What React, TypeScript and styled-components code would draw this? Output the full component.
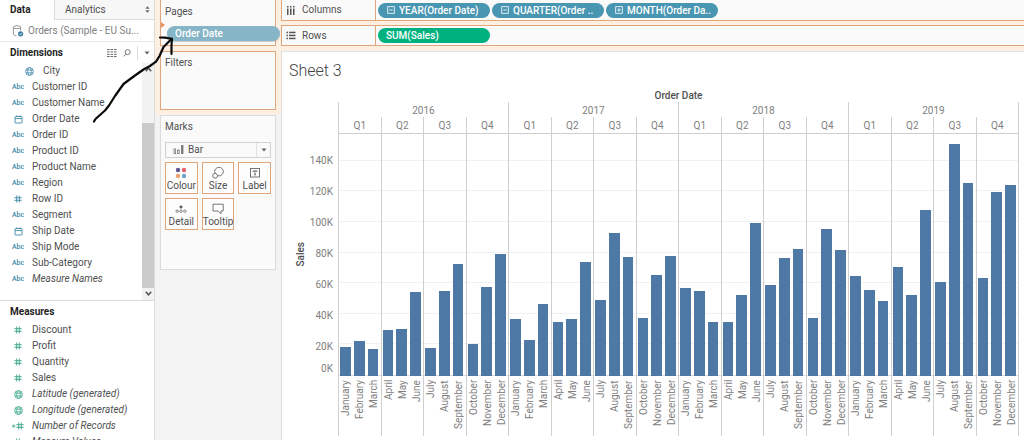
import React from "react";
import styled, { createGlobalStyle, css } from "styled-components";

const color = {
  text: "#505050",
  heading: "#1f1f1f",
  muted: "#808080",
  dimension: "#3f88a6",
  measure: "#35a486",
  orange: "#e0a67a",
  peach: "#fdf0e3",
  line: "#dcdcdc",
  axisLine: "#cfcfcf",
  panel: "#fafafa",
  canvas: "#f3f3f3",
  bar: "#4e79a7",
};

const GlobalStyle = createGlobalStyle`
  *, *::before, *::after { box-sizing: border-box; }
  body { margin: 0; overflow: hidden; background: #fff; }
  body, button, select {
    font-family: Roboto, "Liberation Sans", sans-serif;
    font-size: 10px;
    line-height: 16px;
    color: ${color.text};
  }
  button { padding: 0; border: 0; background: none; cursor: pointer; }
  h1, h2, ul, p { margin: 0; padding: 0; }
  ul { list-style: none; }
`;

const Workspace = styled.div`
  position: relative;
  display: grid;
  grid-template-columns: 155px 126px minmax(0, 1fr);
  height: 100vh;
  overflow: hidden;
`;

/* ---------- Data pane ---------- */

const DataPane = styled.aside`
  display: flex;
  flex-direction: column;
  min-height: 0;
  overflow: hidden;
  background: #fff;
  border-right: 1px solid ${color.line};
`;

const Tabs = styled.div`
  display: flex;
  flex: none;
  height: 20px;
`;

const Tab = styled.button<{ $active?: boolean }>`
  display: flex;
  align-items: center;
  justify-content: space-between;
  text-align: left;
  padding: 0 4px 0 10px;
  ${(p) =>
    p.$active
      ? css`
          width: 54px;
          font-weight: 700;
          color: ${color.heading};
        `
      : css`
          flex: 1;
          background: #f7f7f7;
          border-left: 1px solid ${color.line};
          border-bottom: 1px solid ${color.line};
        `}
`;

const Source = styled.div`
  display: flex;
  flex: none;
  align-items: center;
  gap: 4px;
  height: 22px;
  padding-left: 12px;
  white-space: nowrap;
  color: ${color.muted};
  border-bottom: 1px solid #e6e6e6;
`;

const SectionHead = styled.div`
  display: flex;
  flex: none;
  align-items: center;
  height: 21px;
  padding: 0 4px 0 10px;
`;

const SectionTitle = styled.h2`
  flex: 1;
  font-size: 10px;
  font-weight: 700;
  color: ${color.heading};
`;

const Tools = styled.div`
  display: flex;
  align-items: center;
  gap: 6px;
`;

const IconButton = styled.button`
  display: flex;
`;

const Divider = styled.i`
  width: 1px;
  height: 14px;
  background: ${color.line};
`;

const ScrollArea = styled.div`
  display: flex;
  flex: none;
  height: 238px;
  border-bottom: 1px solid ${color.line};
`;

const FieldList = styled.ul`
  flex: 1;
`;

const FieldRow = styled.li<{ $nested?: boolean; $generated?: boolean }>`
  display: flex;
  align-items: center;
  gap: 7px;
  height: 16px;
  padding-left: ${(p) => (p.$nested ? 22 : 11)}px;
  font-style: ${(p) => (p.$generated ? "italic" : "normal")};
  white-space: nowrap;
`;

const FieldIcon = styled.span<{ $measure?: boolean }>`
  display: flex;
  justify-content: center;
  width: 14px;
  font-size: 7px;
  font-weight: 500;
  font-style: normal;
  color: ${(p) => (p.$measure ? color.measure : color.dimension)};
`;

const ScrollBar = styled.div`
  display: flex;
  flex-direction: column;
  align-items: center;
  width: 12px;
  padding: 4px 0;
  background: #f2f2f2;
`;

const ScrollTrack = styled.div`
  flex: 1;
  width: 100%;
  margin: 3px 0;
  padding-top: 48px;
`;

const ScrollThumb = styled.div`
  height: 100%;
  background: #cbcbcb;
`;

/* ---------- Cards ---------- */

const Cards = styled.div`
  display: flex;
  flex-direction: column;
  background: ${color.canvas};
`;

const DropZone = styled.div`
  display: flex;
  flex-direction: column;
  gap: 5px;
  padding: 0 5px 5px;
  background: ${color.peach};
`;

const Card = styled.section<{ $drop?: boolean; $first?: boolean; $height: number }>`
  position: relative;
  height: ${(p) => p.$height}px;
  padding: ${(p) => (p.$first ? 4 : 3)}px 4px 0;
  background: ${color.panel};
  border: 1px solid ${(p) => (p.$drop ? color.orange : color.line)};
  border-top-width: ${(p) => (p.$first ? 0 : 1)}px;
`;

const MarksCard = styled(Card)`
  margin: 0 5px;
`;

const CardTitle = styled.h2`
  font-size: 10px;
  font-weight: 400;
`;

const DraggedPill = styled.button`
  position: absolute;
  z-index: 2;
  top: 26px;
  left: 6px;
  width: 113px;
  height: 15px;
  padding-left: 8px;
  border-radius: 8px;
  font-weight: 500;
  line-height: 15px;
  text-align: left;
  color: #fff;
  background: #86b5c7;
  box-shadow: 0 1px 1px rgba(0, 0, 0, 0.2);
`;

const DropMarker = styled.i`
  position: absolute;
  top: 22px;
  left: 0;
  border: 3px solid transparent;
  border-left: 4px solid #ea9563;
`;

const MarkPicker = styled.label`
  display: flex;
  align-items: center;
  height: 16px;
  margin-top: 7px;
  background: ${color.panel};
  border: 1px solid #d2d2d2;
`;

const MarkIcon = styled.span`
  display: flex;
  padding: 0 3px 0 7px;
`;

const MarkSelect = styled.select`
  flex: 1;
  min-width: 0;
  height: 14px;
  padding: 0;
  border: 0;
  line-height: 14px;
  appearance: none;
  background: transparent;
`;

const PickerArrow = styled.span`
  display: flex;
  align-items: center;
  justify-content: center;
  width: 14px;
  height: 14px;
  border-left: 1px solid #e2e2e2;
`;

const Tiles = styled.div`
  display: grid;
  grid-template-columns: repeat(3, minmax(0, 1fr));
  gap: 4px;
  margin-top: 4px;
`;

const Tile = styled.button`
  display: flex;
  flex-direction: column;
  align-items: center;
  justify-content: space-between;
  height: 32px;
  padding: 3px 0 1px;
  border: 1px solid ${color.orange};
  line-height: 12px;
  white-space: nowrap;
  background: #fdfdfd;
`;

/* ---------- Shelves ---------- */

const Main = styled.main`
  display: flex;
  flex-direction: column;
  min-width: 0;
`;

const Shelves = styled.div`
  display: flex;
  flex-direction: column;
  gap: 4px;
  padding-bottom: 5px;
  background: ${color.peach};
  border-bottom: 1px solid #e2e2e2;
`;

const Shelf = styled.div<{ $first?: boolean }>`
  display: flex;
  align-items: center;
  height: 21px;
  background: ${color.panel};
  border: 1px solid ${color.orange};
  border-right: 0;
  border-top-width: ${(p) => (p.$first ? 0 : 1)}px;
`;

const ShelfLabel = styled.div`
  display: flex;
  align-items: center;
  gap: 6px;
  width: 94px;
  height: 100%;
  padding-left: 4px;
  border-right: 1px solid ${color.orange};
`;

const Pills = styled.div`
  display: flex;
  gap: 2px;
  padding-left: 2px;
`;

const Pill = styled.button<{ $measure?: boolean }>`
  display: flex;
  align-items: center;
  gap: 4px;
  width: 112px;
  height: 15px;
  padding-left: ${(p) => (p.$measure ? 8 : 9)}px;
  border-radius: 8px;
  font-weight: 500;
  line-height: 15px;
  white-space: nowrap;
  color: #fff;
  background: ${(p) => (p.$measure ? "#00b180" : "#4996b2")};
`;

/* ---------- Sheet ---------- */

const Sheet = styled.section`
  flex: 1;
  padding: 9px 5px 0 0;
  border-left: 1px solid ${color.line};
  background: #fff;
`;

const SheetTitle = styled.h1`
  padding-left: 7px;
  font-size: 16px;
  font-weight: 300;
  line-height: 20px;
  color: #444;
`;

const Chart = styled.div`
  display: grid;
  grid-template-columns: 56px minmax(0, 1fr);
  margin-top: 7px;
`;

const ChartTitle = styled.p`
  grid-column: 2;
  height: 14px;
  font-weight: 500;
  line-height: 16px;
  text-align: center;
`;

const YAxis = styled.div`
  display: flex;
  justify-content: space-between;
  height: 243px;
  margin-top: 31px;
  padding: 0 5px 0 12px;
  color: ${color.muted};
`;

const YTitle = styled.div`
  align-self: center;
  font-weight: 500;
  line-height: 14px;
  color: ${color.text};
  writing-mode: vertical-rl;
  transform: rotate(180deg);
`;

const Ticks = styled.ul`
  display: flex;
  flex-direction: column;
  padding: 13px 0 0;
  text-align: right;
`;

const Tick = styled.li<{ $last?: boolean }>`
  display: flex;
  flex: ${(p) => (p.$last ? "none" : 1)};
  align-items: center;
  justify-content: flex-end;
  line-height: 14px;
`;

const Plot = styled.div`
  position: relative;
  display: flex;
  border-right: 1px solid ${color.axisLine};
`;

const GridLines = styled.div`
  position: absolute;
  top: 31px;
  left: 0;
  right: 0;
  height: 243px;
  border-top: 1px solid ${color.axisLine};
  border-bottom: 1px solid ${color.line};
`;

const GridLine = styled.i`
  position: absolute;
  left: 0;
  right: 0;
  height: 1px;
  background: #f1f1f1;
`;

const Year = styled.div`
  position: relative;
  display: flex;
  flex: 1;
  flex-direction: column;
  min-width: 0;
  border-left: 1px solid ${color.axisLine};
`;

const HeadLabel = styled.div`
  height: 15px;
  line-height: 17px;
  text-align: center;
  color: ${color.muted};
`;

const Quarters = styled.div`
  display: flex;
`;

const Quarter = styled.div`
  flex: 1;
  min-width: 0;
  & + & {
    border-left: 1px solid ${color.axisLine};
  }
`;

const Bars = styled.div`
  display: flex;
  height: 243px;
  margin-top: 1px;
`;

const BarSlot = styled.div`
  display: flex;
  flex: 1;
  align-items: flex-end;
  padding: 0 2px 0 1px;
`;

const Bar = styled.div`
  width: 100%;
  background: ${color.bar};
`;

const Months = styled.div`
  display: flex;
  height: 60px;
  padding-top: 4px;
`;

const Month = styled.div`
  flex: 1;
  display: flex;
  align-items: center;
  justify-content: flex-end;
  line-height: 14px;
  color: ${color.muted};
  writing-mode: vertical-rl;
  transform: rotate(180deg);
`;

const Annotation = styled.svg`
  position: absolute;
  z-index: 3;
  top: 0;
  left: 0;
  pointer-events: none;
`;

/* ---------- Icons ---------- */

const CalendarIcon = () => (
  <svg width="9" height="9" viewBox="0 0 9 9" fill="none" stroke="currentColor">
    <rect x="1" y="1.5" width="7" height="6.5" rx="0.5" strokeWidth="0.9" />
    <path d="M1 3.6h7M2.8 0.3v1.4M6.2 0.3v1.4" strokeWidth="0.9" />
  </svg>
);

const GlobeIcon = () => (
  <svg width="9" height="9" viewBox="0 0 9 9" fill="none" stroke="currentColor" strokeWidth="0.8">
    <circle cx="4.5" cy="4.5" r="3.9" />
    <ellipse cx="4.5" cy="4.5" rx="1.8" ry="3.9" />
    <path d="M1 3.1h7M1 5.9h7" />
  </svg>
);

const HashIcon = ({ calculated }: { calculated?: boolean }) => (
  <svg
    width={calculated ? 12 : 8}
    height="8"
    viewBox={calculated ? "-4 0 12 8" : "0 0 8 8"}
    fill="none"
    stroke="currentColor"
    strokeWidth="0.9"
  >
    <path d="M2.7 0.5v7M5.3 0.5v7M0.3 2.7h7.4M0.3 5.3h7.4" />
    {calculated && <path d="M-3.8 3.3h3M-3.8 4.9h3" />}
  </svg>
);

const DatabaseIcon = () => (
  <svg width="12" height="12" viewBox="0 0 12 12" fill="none" stroke="#8a8a8a" strokeWidth="0.9">
    <ellipse cx="5" cy="2.2" rx="3.6" ry="1.5" />
    <path d="M1.4 2.2v6.9c0 .8 1.3 1.5 3 1.5M8.6 2.2v3.4" />
    <circle cx="8.6" cy="8.8" r="2.6" fill="#3c7ea3" stroke="none" />
    <path d="M7.3 8.8l1 1 1.6-1.9" stroke="#fff" strokeWidth="0.8" />
  </svg>
);

const GridIcon = () => (
  <svg width="10" height="8" viewBox="0 0 10 8" fill="#6b6b6b">
    {[0, 2.4, 4.8, 7].map((y) =>
      [0, 3.5, 7].map((x) => <rect key={`${x}-${y}`} x={x} y={y} width="2.6" height="1" />),
    )}
  </svg>
);

const SearchIcon = () => (
  <svg width="8" height="8" viewBox="0 0 8 8" fill="none" stroke="#6b6b6b" strokeWidth="0.9">
    <circle cx="4.7" cy="3.1" r="2.5" />
    <path d="M2.9 4.9L0.6 7.4" />
  </svg>
);

const CaretIcon = () => (
  <svg width="6" height="4" viewBox="0 0 6 4" fill="#666">
    <path d="M0.5 0.5h5L3 3.5z" />
  </svg>
);

const UpDownIcon = () => (
  <svg width="5" height="7" viewBox="0 0 5 7" fill="#666">
    <path d="M0.3 2.8L2.5 0.3l2.2 2.5zM0.3 4.2h4.4L2.5 6.7z" />
  </svg>
);

const ChevronIcon = ({ down }: { down?: boolean }) => (
  <svg width="7" height="5" viewBox="0 0 7 5" fill="none" stroke="#555" strokeWidth="1.5">
    <path d={down ? "M0.8 0.8L3.5 3.8 6.2 0.8" : "M0.8 4.2L3.5 1.2 6.2 4.2"} />
  </svg>
);

const ColumnsIcon = () => (
  <svg width="10" height="9" viewBox="0 0 10 9" fill="#555">
    {[1, 4, 7].map((x) => (
      <g key={x}>
        <rect x={x} y="0" width="1.5" height="1.5" />
        <rect x={x} y="2.5" width="1.5" height="6.5" />
      </g>
    ))}
  </svg>
);

const RowsIcon = () => (
  <svg width="10" height="9" viewBox="0 0 10 9" fill="#555">
    {[0.7, 3.7, 6.7].map((y) => (
      <g key={y}>
        <rect x="0.5" y={y} width="1.5" height="1.5" />
        <rect x="3" y={y} width="6.5" height="1.5" />
      </g>
    ))}
  </svg>
);

const ExpandIcon = ({ plus }: { plus?: boolean }) => (
  <svg width="8" height="8" viewBox="0 0 8 8" fill="none" stroke="#fff" strokeWidth="0.8">
    <rect x="0.7" y="0.7" width="6.6" height="6.6" />
    <path d={plus ? "M2.2 4h3.6M4 2.2v3.6" : "M2.2 4h3.6"} />
  </svg>
);

const BarMarkIcon = () => (
  <svg width="12" height="10" viewBox="0 0 12 10" fill="none" stroke="#777" strokeWidth="0.8">
    <rect x="1" y="4" width="1.6" height="4.6" />
    <rect x="4.6" y="5" width="1.6" height="3.6" />
    <rect x="8.6" y="0.5" width="1.4" height="8.1" fill="#777" />
  </svg>
);

const tileIcons: Record<string, React.ReactNode> = {
  Colour: (
    <>
      <circle cx="4" cy="4" r="2.2" fill="#5f5591" />
      <circle cx="10" cy="4" r="2.2" fill="#e5646a" />
      <circle cx="4" cy="10" r="2.2" fill="#eba36f" />
      <circle cx="10" cy="10" r="2.2" fill="#6fa3c8" />
    </>
  ),
  Size: (
    <g fill="none" stroke="#666" strokeWidth="0.9">
      <circle cx="8" cy="5.6" r="4.3" />
      <circle cx="4.1" cy="9.8" r="2.4" fill="#fdfdfd" />
    </g>
  ),
  Label: (
    <g fill="none" stroke="#666" strokeWidth="0.9">
      <rect x="2.5" y="2.5" width="9" height="8.5" />
      <path d="M5 6V4.9h4V6M7 4.9v3.9M6 8.8h2" />
    </g>
  ),
  Detail: (
    <g fill="none" stroke="#666" strokeWidth="0.8">
      <circle cx="7" cy="5" r="1.2" fill="#555" />
      <circle cx="3.2" cy="9.2" r="1.2" />
      <circle cx="7" cy="9.2" r="1.2" />
      <circle cx="10.8" cy="9.2" r="1.2" />
    </g>
  ),
  Tooltip: (
    <path
      d="M2 2.2h10.2v6.8H10v2.8L7 9H2z"
      fill="none"
      stroke="#666"
      strokeWidth="0.9"
    />
  ),
};

/* ---------- Data ---------- */

type Kind = "text" | "date" | "geo" | "number" | "calculated";
type Field = { name: string; kind: Kind; nested?: boolean; generated?: boolean };

const dimensions: Field[] = [
  { name: "City", kind: "geo", nested: true },
  { name: "Customer ID", kind: "text" },
  { name: "Customer Name", kind: "text" },
  { name: "Order Date", kind: "date" },
  { name: "Order ID", kind: "text" },
  { name: "Product ID", kind: "text" },
  { name: "Product Name", kind: "text" },
  { name: "Region", kind: "text" },
  { name: "Row ID", kind: "number" },
  { name: "Segment", kind: "text" },
  { name: "Ship Date", kind: "date" },
  { name: "Ship Mode", kind: "text" },
  { name: "Sub-Category", kind: "text" },
  { name: "Measure Names", kind: "text", generated: true },
];

const measures: Field[] = [
  { name: "Discount", kind: "number" },
  { name: "Profit", kind: "number" },
  { name: "Quantity", kind: "number" },
  { name: "Sales", kind: "number" },
  { name: "Latitude (generated)", kind: "geo", generated: true },
  { name: "Longitude (generated)", kind: "geo", generated: true },
  { name: "Number of Records", kind: "calculated", generated: true },
  { name: "Measure Values", kind: "number", generated: true },
];

const months = [
  ["January", "February", "March"],
  ["April", "May", "June"],
  ["July", "August", "September"],
  ["October", "November", "December"],
];

// Monthly sales in thousands, grouped by quarter.
const sales: { year: number; quarters: number[][] }[] = [
  { year: 2016, quarters: [[18.8, 22.7, 17.8], [30.1, 30.6, 54.4], [18.1, 55.1, 72.9], [20.7, 57.7, 79.4]] },
  { year: 2017, quarters: [[36.9, 23.3, 47], [34.7, 36.9, 73.6], [49.3, 93, 77.1], [37.9, 65.5, 77.8]] },
  { year: 2018, quarters: [[57, 55.1, 35.3], [35.3, 52.8, 99.5], [58.7, 76.8, 82.3], [37.6, 95, 81.7]] },
  { year: 2019, quarters: [[64.8, 55.7, 48.6], [70.6, 52.5, 107.8], [61.2, 150.4, 125.4], [63.5, 119.2, 124.1]] },
];

const axisMax = 157.5;
const ticks = [140, 120, 100, 80, 60, 40, 20, 0];
const percent = (value: number) => `${(value / axisMax) * 100}%`;

const kindIcon: Record<Kind, React.ReactNode> = {
  text: "Abc",
  date: <CalendarIcon />,
  geo: <GlobeIcon />,
  number: <HashIcon />,
  calculated: <HashIcon calculated />,
};

const Fields = ({ items, measure }: { items: Field[]; measure?: boolean }) => (
  <FieldList>
    {items.map((f) => (
      <FieldRow key={f.name} $nested={f.nested} $generated={f.generated}>
        <FieldIcon $measure={measure}>{kindIcon[f.kind]}</FieldIcon>
        {f.name}
      </FieldRow>
    ))}
  </FieldList>
);

export default function App() {
  return (
    <>
      <GlobalStyle />
      <Workspace>
        <DataPane>
          <Tabs>
            <Tab $active>Data</Tab>
            <Tab>
              Analytics
              <UpDownIcon />
            </Tab>
          </Tabs>
          <Source>
            <DatabaseIcon />
            Orders (Sample - EU Su...
          </Source>
          <SectionHead>
            <SectionTitle>Dimensions</SectionTitle>
            <Tools>
              <IconButton aria-label="View data"><GridIcon /></IconButton>
              <IconButton aria-label="Find field"><SearchIcon /></IconButton>
              <Divider />
              <IconButton aria-label="Dimensions menu"><CaretIcon /></IconButton>
            </Tools>
          </SectionHead>
          <ScrollArea>
            <Fields items={dimensions} />
            <ScrollBar>
              <ChevronIcon />
              <ScrollTrack>
                <ScrollThumb />
              </ScrollTrack>
              <ChevronIcon down />
            </ScrollBar>
          </ScrollArea>
          <SectionHead>
            <SectionTitle>Measures</SectionTitle>
          </SectionHead>
          <Fields items={measures} measure />
        </DataPane>

        <Cards>
          <DropZone>
            <Card $drop $first $height={46}>
              <CardTitle>Pages</CardTitle>
              <DropMarker />
              <DraggedPill>Order Date</DraggedPill>
            </Card>
            <Card $drop $height={59}>
              <CardTitle>Filters</CardTitle>
            </Card>
          </DropZone>
          <MarksCard $height={155}>
            <CardTitle>Marks</CardTitle>
            <MarkPicker>
              <MarkIcon><BarMarkIcon /></MarkIcon>
              <MarkSelect aria-label="Mark type" defaultValue="Bar">
                <option>Bar</option>
              </MarkSelect>
              <PickerArrow><CaretIcon /></PickerArrow>
            </MarkPicker>
            <Tiles>
              {Object.entries(tileIcons).map(([name, icon]) => (
                <Tile key={name}>
                  <svg width="14" height="14" viewBox="0 0 14 14">{icon}</svg>
                  {name}
                </Tile>
              ))}
            </Tiles>
          </MarksCard>
        </Cards>

        <Main>
          <Shelves>
            <Shelf $first>
              <ShelfLabel><ColumnsIcon />Columns</ShelfLabel>
              <Pills>
                <Pill><ExpandIcon />YEAR(Order Date)</Pill>
                <Pill><ExpandIcon />QUARTER(Order ..</Pill>
                <Pill><ExpandIcon plus />MONTH(Order Da..</Pill>
              </Pills>
            </Shelf>
            <Shelf>
              <ShelfLabel><RowsIcon />Rows</ShelfLabel>
              <Pills>
                <Pill $measure>SUM(Sales)</Pill>
              </Pills>
            </Shelf>
          </Shelves>
          <Sheet>
            <SheetTitle>Sheet 3</SheetTitle>
            <Chart>
              <ChartTitle>Order Date</ChartTitle>
              <YAxis>
                <YTitle>Sales</YTitle>
                <Ticks>
                  {ticks.map((t) => (
                    <Tick key={t} $last={t === 0}>{t}K</Tick>
                  ))}
                </Ticks>
              </YAxis>
              <Plot>
                <GridLines>
                  {ticks.map((t) => t > 0 && <GridLine key={t} style={{ bottom: percent(t) }} />)}
                </GridLines>
                {sales.map(({ year, quarters }) => (
                  <Year key={year}>
                    <HeadLabel>{year}</HeadLabel>
                    <Quarters>
                      {quarters.map((values, q) => (
                        <Quarter key={q}>
                          <HeadLabel>Q{q + 1}</HeadLabel>
                          <Bars>
                            {values.map((v, m) => (
                              <BarSlot key={m}>
                                <Bar style={{ height: percent(v) }} />
                              </BarSlot>
                            ))}
                          </Bars>
                          <Months>
                            {months[q].map((name) => (
                              <Month key={name}>{name}</Month>
                            ))}
                          </Months>
                        </Quarter>
                      ))}
                    </Quarters>
                  </Year>
                ))}
              </Plot>
            </Chart>
          </Sheet>
        </Main>

        <Annotation width="180" height="130" viewBox="0 0 180 130" fill="none" stroke="#0a0a0a" strokeWidth="2.2" strokeLinecap="round" strokeLinejoin="round">
          <path d="M94 121.5L95.5 119 105 110.5 109 105.5 115 96 123.5 84 135 75.5 143.5 69.5 150 66 156 61.7 159.5 56 163.5 47 171.5 39" />
          <path d="M160 37.5L165 37.7 172 38.8 171.5 45V54" />
        </Annotation>
      </Workspace>
    </>
  );
}
